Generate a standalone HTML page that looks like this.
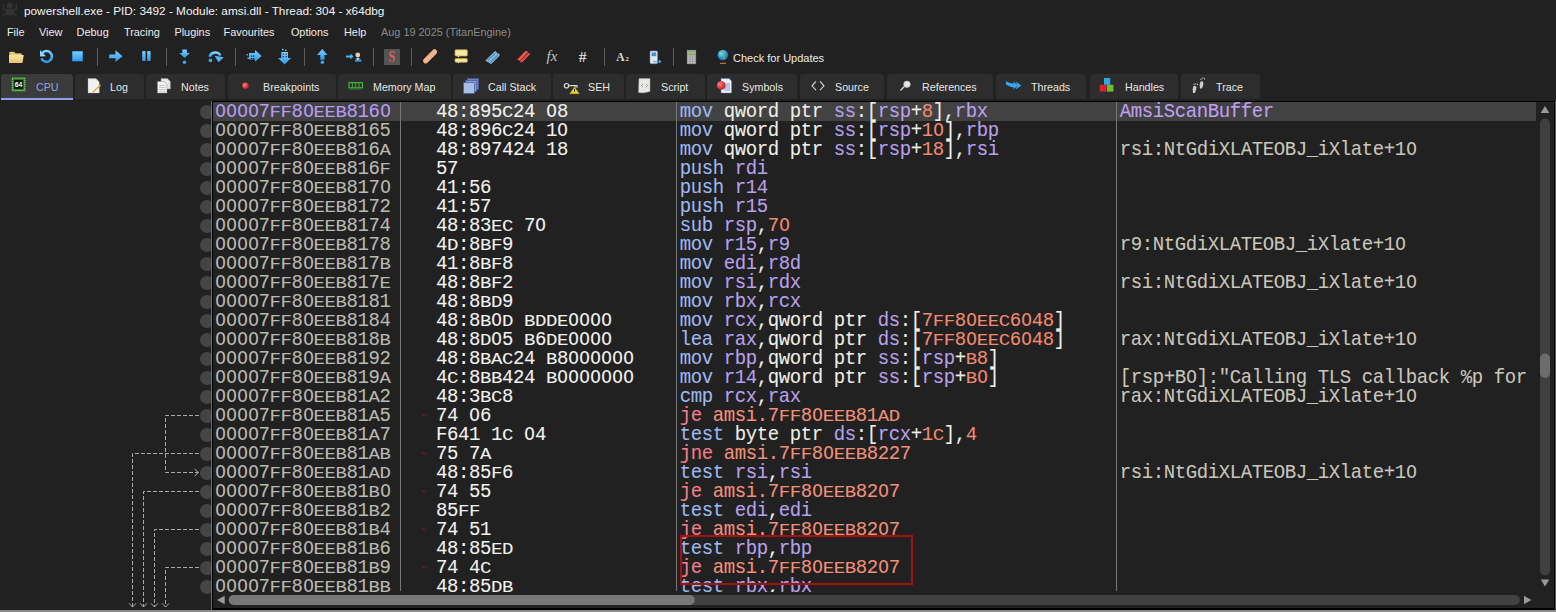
<!DOCTYPE html>
<html><head><meta charset="utf-8"><title>x64dbg</title>
<style>
html,body{margin:0;padding:0}
body{width:1556px;height:612px;background:#212121;overflow:hidden;position:relative}
.menu{position:absolute;top:26px;font:10.9px 'Liberation Sans', sans-serif;color:#ececec;white-space:pre;line-height:12px}
.tabt{position:absolute;top:81px;font:10.7px 'Liberation Sans', sans-serif;white-space:pre;line-height:12px}
.mono{position:absolute;transform:translateX(-0.20px) scaleY(1.06);transform-origin:0 15px;padding-top:1.4px;box-sizing:border-box;-webkit-text-stroke:0.08px currentColor;font-family:'Liberation Mono', monospace;font-size:19px;letter-spacing:-0.402px;line-height:19px;white-space:pre;height:19px}
.sc{font-weight:normal;display:inline-block;transform:scaleY(0.8);transform-origin:50% 80%}
.z{font-style:normal;display:inline-block;transform:scaleX(0.93)}
.sd{font-weight:normal;display:inline-block;transform:scaleY(0.84);transform-origin:50% 80%}
.bp{position:absolute;left:200.2px;width:14px;height:14px;border-radius:50%;background:#454545}
</style></head><body>

<svg style="position:absolute;left:0;top:0" width="22" height="20"><g fill="#333" stroke="#333"><circle cx="9.8" cy="5.4" r="3" stroke="none"/><path d="M6 9 h7.6 v6 h-7.6 Z" stroke="none"/><path d="M3.3 3.5 V8.5 L6.5 10.5 M16.3 3.5 V8.5 L13 10.5 M2 10 H6 M17.5 10 H13.5 M3 16 L6.5 12.5 M16.5 16 L13 12.5" stroke-width="1.2" fill="none"/></g></svg>
<div id="title" style="position:absolute;left:24px;top:2px;font:11.8px 'Liberation Sans', sans-serif;color:#f4f4f4;white-space:pre;line-height:18px">powershell.exe - PID: 3492 - Module: amsi.dll - Thread: 304 - x64dbg</div>

<div class="menu" style="left:6.9px">File</div>
<div class="menu" style="left:39.0px">View</div>
<div class="menu" style="left:76.6px">Debug</div>
<div class="menu" style="left:123.9px">Tracing</div>
<div class="menu" style="left:174.4px">Plugins</div>
<div class="menu" style="left:223.6px">Favourites</div>
<div class="menu" style="left:290.9px">Options</div>
<div class="menu" style="left:344.0px">Help</div>
<div class="menu" style="left:381px;color:#8a8a8a">Aug 19 2025 (TitanEngine)</div>
<div style="position:absolute;left:97px;top:48px;width:1px;height:18px;background:#5c5c5c"></div>
<div style="position:absolute;left:166px;top:48px;width:1px;height:18px;background:#5c5c5c"></div>
<div style="position:absolute;left:235px;top:48px;width:1px;height:18px;background:#5c5c5c"></div>
<div style="position:absolute;left:304px;top:48px;width:1px;height:18px;background:#5c5c5c"></div>
<div style="position:absolute;left:373px;top:48px;width:1px;height:18px;background:#5c5c5c"></div>
<div style="position:absolute;left:411px;top:48px;width:1px;height:18px;background:#5c5c5c"></div>
<div style="position:absolute;left:604px;top:48px;width:1px;height:18px;background:#5c5c5c"></div>
<div style="position:absolute;left:673px;top:48px;width:1px;height:18px;background:#5c5c5c"></div>
<svg style="position:absolute;left:0;top:0;z-index:5" width="1300" height="100" viewBox="0 0 1300 100"><defs>
<linearGradient id="gb" x1="0" y1="0" x2="0" y2="1"><stop offset="0" stop-color="#7fd0ff"/><stop offset="1" stop-color="#2a98e6"/></linearGradient>
<linearGradient id="gy" x1="0" y1="0" x2="0" y2="1"><stop offset="0" stop-color="#fbe6a6"/><stop offset="1" stop-color="#e9c270"/></linearGradient>
<radialGradient id="gglobe" cx="0.4" cy="0.35" r="0.7"><stop offset="0" stop-color="#8fe0ff"/><stop offset="0.6" stop-color="#2a8ed8"/><stop offset="1" stop-color="#1d5fa8"/></radialGradient>
<radialGradient id="gred" cx="0.35" cy="0.35" r="0.7"><stop offset="0" stop-color="#ff8080"/><stop offset="1" stop-color="#c01818"/></radialGradient>
</defs><path d="M9 51.5 h5 l1.5 1.5 h6.5 v3 H9 Z" fill="#e8c878" stroke="#1a1a1a" stroke-width="0.6"/><path d="M9 55 h14.7 l-1.2 8 H9 Z" fill="url(#gy)"/><path d="M42.2 53.2 A5.4 5.4 0 1 1 41.5 58.5" stroke="url(#gb)" stroke-width="2.6" fill="none"/><path d="M40 50 L46 56.2 L40 56.6 Z" fill="#8cd4ff"/><rect x="72" y="51" width="11" height="10.6" fill="url(#gb)" stroke="#0d3350" stroke-width="0.6"/><path d="M109.2 54.4 H115.5 V50.3 L122.6 56.2 L115.5 62 V58.2 H109.2 Z" fill="url(#gb)"/><rect x="142.2" y="51.1" width="3.4" height="10" rx="0.8" fill="url(#gb)"/><rect x="147.2" y="51.1" width="3.4" height="10" rx="0.8" fill="url(#gb)"/><path d="M182.3 49.4 H186.9 V53 H189.8 L184.6 57.9 L179.4 53 H182.3 Z" fill="url(#gb)"/><circle cx="184.5" cy="62.3" r="1.8" fill="#3aa8f0"/><circle cx="210.4" cy="60.4" r="1.8" fill="#3aa8f0"/><path d="M209.6 56.8 A6 6 0 0 1 220.5 55.5" stroke="url(#gb)" stroke-width="2.6" fill="none"/><path d="M214.5 55.8 L223.8 57.2 L218.6 62.3 Z" fill="#50b8f8"/><path d="M249 53 H255 V50 L261.7 56 L255 61.8 V59.6 H249 Z" fill="url(#gb)"/><rect x="246.5" y="54" width="1.5" height="1.5" fill="#4aaef0"/><rect x="247.5" y="57.5" width="1.5" height="1.5" fill="#4aaef0"/><rect x="251" y="55.5" width="1.3" height="1.3" fill="#1d2a36"/><rect x="251" y="58" width="1.3" height="1.3" fill="#1d2a36"/><rect x="253" y="55.5" width="1.3" height="1.3" fill="#1d2a36"/><rect x="253" y="58" width="1.3" height="1.3" fill="#1d2a36"/><path d="M281.3 52 H288 V58 H291 L284.6 64.4 L278 58 H281.3 Z" fill="url(#gb)"/><rect x="282" y="48.8" width="1.5" height="1.5" fill="#6cc4ff"/><rect x="285" y="49.6" width="1.5" height="1.5" fill="#6cc4ff"/><rect x="282.6" y="53.5" width="1.2" height="1.2" fill="#1d2a36"/><rect x="285.6" y="53.5" width="1.2" height="1.2" fill="#1d2a36"/><rect x="282.6" y="56" width="1.2" height="1.2" fill="#1d2a36"/><rect x="285.6" y="56" width="1.2" height="1.2" fill="#1d2a36"/><path d="M322.3 49 L327.6 55 H324.5 V59.7 H320.3 V55 H316.9 Z" fill="url(#gb)"/><circle cx="322.4" cy="62.2" r="1.8" fill="#3aa8f0"/><path d="M346 55.6 H350.5 V53.6 L353.5 56.5 L350.5 59.4 V57.4 H346 Z" fill="#50b8f8"/><circle cx="357.8" cy="55" r="2.4" fill="#f2c6a0"/><path d="M354.8 61.8 Q355.5 57.6 357.8 57.6 Q360.3 57.6 361.9 61.8 Z" fill="#3a8ad0"/><path d="M357 58 L358.6 58 L357.8 61 Z" fill="#fff"/><rect x="384" y="49" width="16" height="16" fill="#535650"/><text x="0" y="0" text-anchor="middle" transform="translate(391.8 62.4) scale(0.72 1)" font-family="Liberation Serif" font-weight="bold" font-size="16.5" fill="#d46a7a" stroke="#b04858" stroke-width="0.5">S</text><path d="M425.6 60.8 L434.6 51.8" stroke="#1a1a1a" stroke-width="6.4" stroke-linecap="round"/><path d="M425.6 60.8 L434.6 51.8" stroke="#f0b48e" stroke-width="5.2" stroke-linecap="round"/><path d="M428.5 53.5 l3.6 3.6 M430 52 l3.6 3.6" stroke="#d99670" stroke-width="0.6"/><rect x="455" y="49.8" width="12.3" height="6.2" rx="1" fill="#f3eaa8" stroke="#c9a638" stroke-width="0.8"/><rect x="455" y="58.6" width="12.3" height="3.6" rx="1" fill="#f3eaa8" stroke="#c9a638" stroke-width="0.8"/><path d="M457.5 56 l0.8 1.6 l1.2 -1.6 Z M457.5 62.2 l0.8 1.4 l1.2 -1.4 Z" fill="#f3eaa8"/><path d="M486 60.5 L494.5 52 L496 51.8 L496.6 53.4 L488.2 61.8 Z" fill="#3c9ad6" stroke="#e8f4ff" stroke-width="0.7"/><path d="M489 62.3 L497.2 54 L498.8 53.9 L499.2 55.5 L491 63.6 Z" fill="#3c9ad6" stroke="#e8f4ff" stroke-width="0.7"/><path d="M517 59.8 L525.4 51 L528.5 51.5 L520 60.8 Z" fill="#f05454"/><path d="M519.6 61.8 L528 53 L530.6 53.6 L522.2 62.6 Z" fill="#f04848"/><text x="546.5" y="60.6" font-family="Liberation Serif" font-style="italic" font-size="15" fill="#c4c4c4">fx</text><text x="578.8" y="62.4" font-family="Liberation Serif" font-weight="bold" font-size="15.5" fill="#d4d4d4">#</text><text x="616.3" y="61.4" font-family="Liberation Serif" font-weight="bold" font-size="11.6" fill="#dcdcdc">A</text><text x="625.4" y="61.4" font-family="Liberation Serif" font-weight="bold" font-size="6.8" fill="#dcdcdc">2</text><rect x="650" y="50.9" width="7.6" height="12.8" rx="1.2" fill="#dfe6ee" stroke="#7a8a9a" stroke-width="0.5"/><rect x="651.6" y="52.4" width="4.6" height="3.8" fill="#4a90d8"/><path d="M653.5 61.3 H659 V59.6 L661.8 61.5 L659 63.4 V62.3 H653.5 Z" fill="#3aa0f0"/><rect x="686.6" y="49.6" width="9.8" height="14.9" fill="#959595" stroke="#151515" stroke-width="0.6"/><rect x="687.6" y="51.4" width="7.8" height="2.6" fill="#90c078"/><rect x="687.8" y="55.3" width="1.8" height="1.4" fill="#c8c8c8"/><rect x="690.5" y="55.3" width="1.8" height="1.4" fill="#c8c8c8"/><rect x="693.2" y="55.3" width="1.8" height="1.4" fill="#c8c8c8"/><rect x="687.8" y="57.5" width="1.8" height="1.4" fill="#c8c8c8"/><rect x="690.5" y="57.5" width="1.8" height="1.4" fill="#c8c8c8"/><rect x="693.2" y="57.5" width="1.8" height="1.4" fill="#c8c8c8"/><rect x="687.8" y="59.7" width="1.8" height="1.4" fill="#c8c8c8"/><rect x="690.5" y="59.7" width="1.8" height="1.4" fill="#c8c8c8"/><rect x="693.2" y="59.7" width="1.8" height="1.4" fill="#c8c8c8"/><rect x="687.8" y="61.9" width="1.8" height="1.4" fill="#c8c8c8"/><rect x="690.5" y="61.9" width="1.8" height="1.4" fill="#c8c8c8"/><rect x="693.2" y="61.9" width="1.8" height="1.4" fill="#c8c8c8"/><circle cx="722.9" cy="55" r="5.3" fill="url(#gglobe)"/><path d="M720 52 q2 -1 3 1 q-1 2 1 3 q1 2 -1 3" stroke="#5cc05c" stroke-width="1.3" fill="none"/><rect x="720" y="62.8" width="6" height="1" fill="#e08040"/><rect x="11.6" y="77.4" width="14" height="14" fill="#2f7f28"/><rect x="12.4" y="78.2" width="12.4" height="12.4" fill="none" stroke="#9be08a" stroke-width="1" stroke-dasharray="1 1"/><rect x="14" y="79.8" width="9.2" height="9.2" fill="#0c1f0a"/><text x="18.6" y="87.2" text-anchor="middle" font-family="Liberation Sans" font-weight="bold" font-size="6.8" fill="#ffffff">64</text><path d="M88 78.6 H96 L99.3 82 V93 H88 Z" fill="#f2f2f2" stroke="#9a9a9a" stroke-width="0.4"/><path d="M93 92 L100.5 85" stroke="#d9b43a" stroke-width="1.6"/><path d="M161 78.6 H167.5 L170.4 81.5 V89 H161 Z" fill="#e8e8e8" stroke="#888" stroke-width="0.5"/><path d="M157.5 81.5 H164 L167 84.4 V93 H157.5 Z" fill="#f4f4f4" stroke="#888" stroke-width="0.5"/><path d="M159 85.5 H165.5" stroke="#9aa0a8" stroke-width="0.5"/><path d="M159 87.5 H165.5" stroke="#9aa0a8" stroke-width="0.5"/><path d="M159 89.5 H165.5" stroke="#9aa0a8" stroke-width="0.5"/><path d="M159 91.2 H165.5" stroke="#9aa0a8" stroke-width="0.5"/><circle cx="245.5" cy="85.8" r="3.2" fill="url(#gred)"/><rect x="349" y="82.6" width="13.4" height="5.2" fill="none" stroke="#3fb43a" stroke-width="1.2"/><path d="M352.4 82.6 V87.8 M355.7 82.6 V87.8 M359 82.6 V87.8" stroke="#3fb43a" stroke-width="1"/><path d="M349.5 89.2 H362" stroke="#3fb43a" stroke-width="1" stroke-dasharray="0.7 0.9"/><rect x="467.5" y="78.6" width="11" height="11" fill="#6f86c0" stroke="#3e5aa0" stroke-width="0.7"/><rect x="465.5" y="80.6" width="11" height="11" fill="#8aa0d6" stroke="#3e5aa0" stroke-width="0.7"/><rect x="463.5" y="82.6" width="11" height="11" fill="#a9bde8" stroke="#3e5aa0" stroke-width="0.7"/><circle cx="566.5" cy="85.7" r="2.2" fill="none" stroke="#d8d8d8" stroke-width="1.2"/><path d="M568.6 85.7 H577.6 M575 85.7 v2 M577 85.7 v2" stroke="#d8d8d8" stroke-width="1.2"/><path d="M574.5 86.6 L579.7 94 H569.3 Z" fill="#f2d020" stroke="#404040" stroke-width="0.5"/><path d="M574.5 89 V91.6" stroke="#222" stroke-width="1"/><path d="M639 78.6 H650 V91.5 Q644 93.5 638.5 92.6 Z" fill="#e8e8e4" stroke="#a0a0a0" stroke-width="0.5"/><path d="M643 84 l-1.6 1.6 l1.6 1.6 M646 84 l1.6 1.6 l-1.6 1.6" stroke="#707070" stroke-width="0.7" fill="none"/><path d="M721 78.6 H729 L731.6 81 V93 H721 Z" fill="#f0f4ff" stroke="#5070c0" stroke-width="0.5"/><path d="M724 84 H730" stroke="#4a6ad0" stroke-width="0.7"/><path d="M724 86 H730" stroke="#4a6ad0" stroke-width="0.7"/><path d="M724 88 H730" stroke="#4a6ad0" stroke-width="0.7"/><path d="M724 90 H730" stroke="#4a6ad0" stroke-width="0.7"/><circle cx="721.2" cy="85.4" r="4.3" fill="url(#gred)"/><path d="M816 81.4 L812 85.8 L816 90.2 M820 81.4 L824 85.8 L820 90.2" stroke="#d6d6d6" stroke-width="1.1" fill="none"/><path d="M900.5 90.4 L905 85.8" stroke="#d0d0d0" stroke-width="1.4"/><circle cx="907" cy="84.3" r="3.3" fill="#e8e8e8" stroke="#b0b0b0" stroke-width="0.6"/><path d="M1006 81 Q1010 84 1014 83.3 L1013 81.3 L1018 85.6 L1013 89.6 L1014 87.5 Q1010 87 1006 84.5 Z" fill="#3aa6f0"/><path d="M1015.5 81.3 L1021.4 85.6 L1015.5 89.6 L1017.6 85.6 Z" fill="#3aa6f0"/><rect x="1104" y="78" width="6.2" height="6.8" fill="#2aa8e8"/><rect x="1099.8" y="84.8" width="6.6" height="6.8" fill="#e0202a"/><rect x="1107" y="84.8" width="6.4" height="6.8" fill="#6cc030"/><path d="M1193 93 q-1 -4 0.5 -7 q2.5 -1 3 1.5 q-0.5 3 -1.5 5.5 Z" fill="#cfcfcf"/><path d="M1200 88.5 q-1 -4 0.5 -7 q2.5 -1 3 1.5 q-0.5 3 -1.5 5.5 Z" fill="#cfcfcf"/><path d="M1193.5 84.3 h1 M1195.3 83.8 h1 M1197 84.3 h1 M1200.5 79.3 h1 M1202.3 78.2 h1 M1204 78.8 h1" stroke="#cfcfcf" stroke-width="1.2"/></svg>
<div style="position:absolute;left:733px;top:50px;font:11px 'Liberation Sans', sans-serif;color:#ececec;white-space:pre;line-height:16px">Check for Updates</div>
<div style="position:absolute;left:1px;top:74px;width:72px;height:25px;background:#3b3b3b;border-radius:3px 3px 0 0"></div>
<div class="tabt" style="left:36px;color:#8fa2e6">CPU</div>

<div style="position:absolute;left:75px;top:74px;width:69px;height:25px;background:#2d2d2d;border-radius:3px 3px 0 0"></div>
<div class="tabt" style="left:110px;color:#e6e6e6">Log</div>

<div style="position:absolute;left:146px;top:74px;width:79px;height:25px;background:#2d2d2d;border-radius:3px 3px 0 0"></div>
<div class="tabt" style="left:181px;color:#e6e6e6">Notes</div>

<div style="position:absolute;left:228px;top:74px;width:108px;height:25px;background:#2d2d2d;border-radius:3px 3px 0 0"></div>
<div class="tabt" style="left:263px;color:#e6e6e6">Breakpoints</div>

<div style="position:absolute;left:338px;top:74px;width:113px;height:25px;background:#2d2d2d;border-radius:3px 3px 0 0"></div>
<div class="tabt" style="left:373px;color:#e6e6e6">Memory Map</div>

<div style="position:absolute;left:453px;top:74px;width:98px;height:25px;background:#2d2d2d;border-radius:3px 3px 0 0"></div>
<div class="tabt" style="left:488px;color:#e6e6e6">Call Stack</div>

<div style="position:absolute;left:553px;top:74px;width:71px;height:25px;background:#2d2d2d;border-radius:3px 3px 0 0"></div>
<div class="tabt" style="left:588px;color:#e6e6e6">SEH</div>

<div style="position:absolute;left:626px;top:74px;width:79px;height:25px;background:#2d2d2d;border-radius:3px 3px 0 0"></div>
<div class="tabt" style="left:661px;color:#e6e6e6">Script</div>

<div style="position:absolute;left:707px;top:74px;width:90px;height:25px;background:#2d2d2d;border-radius:3px 3px 0 0"></div>
<div class="tabt" style="left:742px;color:#e6e6e6">Symbols</div>

<div style="position:absolute;left:800px;top:74px;width:84px;height:25px;background:#2d2d2d;border-radius:3px 3px 0 0"></div>
<div class="tabt" style="left:835px;color:#e6e6e6">Source</div>

<div style="position:absolute;left:887px;top:74px;width:106px;height:25px;background:#2d2d2d;border-radius:3px 3px 0 0"></div>
<div class="tabt" style="left:922px;color:#e6e6e6">References</div>

<div style="position:absolute;left:996px;top:74px;width:90px;height:25px;background:#2d2d2d;border-radius:3px 3px 0 0"></div>
<div class="tabt" style="left:1031px;color:#e6e6e6">Threads</div>

<div style="position:absolute;left:1090px;top:74px;width:88px;height:25px;background:#2d2d2d;border-radius:3px 3px 0 0"></div>
<div class="tabt" style="left:1125px;color:#e6e6e6">Handles</div>

<div style="position:absolute;left:1181px;top:74px;width:79px;height:25px;background:#2d2d2d;border-radius:3px 3px 0 0"></div>
<div class="tabt" style="left:1216px;color:#e6e6e6">Trace</div>

<div style="position:absolute;left:1px;top:98px;width:72px;height:2px;background:#8ea0ec"></div>
<div style="position:absolute;left:212px;top:101px;width:1343px;height:1px;background:#000"></div>
<div style="position:absolute;left:211px;top:101px;width:1px;height:509px;background:#6e6e6e"></div>
<div style="position:absolute;left:212px;top:101px;width:1px;height:509px;background:#000"></div>
<div style="position:absolute;left:1554px;top:101px;width:1px;height:509px;background:#000"></div>
<div style="position:absolute;left:1555px;top:101px;width:1px;height:509px;background:#5a5a5a"></div>
<div style="position:absolute;left:212px;top:608px;width:1343px;height:2px;background:#000"></div>
<div style="position:absolute;left:0px;top:610px;width:1556px;height:2px;background:#8a8a8a"></div>
<div style="position:absolute;left:213px;top:102px;width:1323px;height:19px;background:#424242"></div>
<div style="position:absolute;left:400px;top:102px;width:1px;height:489px;background:#787878"></div>
<div style="position:absolute;left:676px;top:102px;width:1px;height:489px;background:#787878"></div>
<div style="position:absolute;left:1116px;top:102px;width:1px;height:489px;background:#787878"></div>
<div style="position:absolute;left:0;top:101px;width:211px;height:509px;overflow:hidden">
<div class="bp" style="top:3.5px"></div>
<div class="bp" style="top:22.5px"></div>
<div class="bp" style="top:41.5px"></div>
<div class="bp" style="top:60.5px"></div>
<div class="bp" style="top:79.5px"></div>
<div class="bp" style="top:98.5px"></div>
<div class="bp" style="top:117.5px"></div>
<div class="bp" style="top:136.5px"></div>
<div class="bp" style="top:155.5px"></div>
<div class="bp" style="top:174.5px"></div>
<div class="bp" style="top:193.5px"></div>
<div class="bp" style="top:212.5px"></div>
<div class="bp" style="top:231.5px"></div>
<div class="bp" style="top:250.5px"></div>
<div class="bp" style="top:269.5px"></div>
<div class="bp" style="top:288.5px"></div>
<div class="bp" style="top:307.5px"></div>
<div class="bp" style="top:326.5px"></div>
<div class="bp" style="top:345.5px"></div>
<div class="bp" style="top:364.5px"></div>
<div class="bp" style="top:383.5px"></div>
<div class="bp" style="top:402.5px"></div>
<div class="bp" style="top:421.5px"></div>
<div class="bp" style="top:440.5px"></div>
<div class="bp" style="top:459.5px"></div>
<div class="bp" style="top:478.5px"></div>
</div>
<div id="rows" style="position:absolute;left:0;top:0;width:1536px;height:592px;overflow:hidden">
<div class="mono" style="left:214.6px;top:102px;color:#b79cf2"><i class="z">O</i><i class="z">O</i><i class="z">O</i><i class="z">O</i>7<b class="sc">F</b><b class="sc">F</b>8<i class="z">O</i><b class="sc">E</b><b class="sc">E</b><b class="sc">B</b>816<i class="z">O</i></div>
<div class="mono" style="left:436.2px;top:102px;color:#f2f2ee">48:895<b class="sc">C</b>24 <i class="z">O</i>8</div>
<div class="mono" style="left:680px;top:102px"><span style="color:#9fb8f0">mov</span><span style="color:#eeeee6"> qword ptr </span><span style="color:#b8a0e8">ss</span><span style="color:#eeeee6">:[</span><span style="color:#b8a0ec">rsp</span><span style="color:#eeeee6">+</span><span style="color:#f08a70">8</span><span style="color:#eeeee6">],</span><span style="color:#b8a0ec">rbx</span></div>
<div class="mono" style="left:1120px;top:102px;color:#c0a0f0">AmsiScanBuffer</div>
<div class="mono" style="left:214.6px;top:121px;color:#b9b9b1"><i class="z">O</i><i class="z">O</i><i class="z">O</i><i class="z">O</i>7<b class="sc">F</b><b class="sc">F</b>8<i class="z">O</i><b class="sc">E</b><b class="sc">E</b><b class="sc">B</b>8165</div>
<div class="mono" style="left:436.2px;top:121px;color:#f2f2ee">48:896<b class="sc">C</b>24 1<i class="z">O</i></div>
<div class="mono" style="left:680px;top:121px"><span style="color:#9fb8f0">mov</span><span style="color:#eeeee6"> qword ptr </span><span style="color:#b8a0e8">ss</span><span style="color:#eeeee6">:[</span><span style="color:#b8a0ec">rsp</span><span style="color:#eeeee6">+</span><span style="color:#f08a70">1<i class="z">O</i></span><span style="color:#eeeee6">],</span><span style="color:#b8a0ec">rbp</span></div>
<div class="mono" style="left:214.6px;top:140px;color:#b9b9b1"><i class="z">O</i><i class="z">O</i><i class="z">O</i><i class="z">O</i>7<b class="sc">F</b><b class="sc">F</b>8<i class="z">O</i><b class="sc">E</b><b class="sc">E</b><b class="sc">B</b>816<b class="sc">A</b></div>
<div class="mono" style="left:436.2px;top:140px;color:#f2f2ee">48:897424 18</div>
<div class="mono" style="left:680px;top:140px"><span style="color:#9fb8f0">mov</span><span style="color:#eeeee6"> qword ptr </span><span style="color:#b8a0e8">ss</span><span style="color:#eeeee6">:[</span><span style="color:#b8a0ec">rsp</span><span style="color:#eeeee6">+</span><span style="color:#f08a70">18</span><span style="color:#eeeee6">],</span><span style="color:#b8a0ec">rsi</span></div>
<div class="mono" style="left:1120px;top:140px;color:#c9c6bb">rsi:NtGdiXLATEOBJ_iXlate+1<i class="z">O</i></div>
<div class="mono" style="left:214.6px;top:159px;color:#b9b9b1"><i class="z">O</i><i class="z">O</i><i class="z">O</i><i class="z">O</i>7<b class="sc">F</b><b class="sc">F</b>8<i class="z">O</i><b class="sc">E</b><b class="sc">E</b><b class="sc">B</b>816<b class="sc">F</b></div>
<div class="mono" style="left:436.2px;top:159px;color:#f2f2ee">57</div>
<div class="mono" style="left:680px;top:159px"><span style="color:#9fb8f0">push</span><span style="color:#eeeee6"> </span><span style="color:#b8a0ec">rdi</span></div>
<div class="mono" style="left:214.6px;top:178px;color:#b9b9b1"><i class="z">O</i><i class="z">O</i><i class="z">O</i><i class="z">O</i>7<b class="sc">F</b><b class="sc">F</b>8<i class="z">O</i><b class="sc">E</b><b class="sc">E</b><b class="sc">B</b>817<i class="z">O</i></div>
<div class="mono" style="left:436.2px;top:178px;color:#f2f2ee">41:56</div>
<div class="mono" style="left:680px;top:178px"><span style="color:#9fb8f0">push</span><span style="color:#eeeee6"> </span><span style="color:#b8a0ec">r14</span></div>
<div class="mono" style="left:214.6px;top:197px;color:#b9b9b1"><i class="z">O</i><i class="z">O</i><i class="z">O</i><i class="z">O</i>7<b class="sc">F</b><b class="sc">F</b>8<i class="z">O</i><b class="sc">E</b><b class="sc">E</b><b class="sc">B</b>8172</div>
<div class="mono" style="left:436.2px;top:197px;color:#f2f2ee">41:57</div>
<div class="mono" style="left:680px;top:197px"><span style="color:#9fb8f0">push</span><span style="color:#eeeee6"> </span><span style="color:#b8a0ec">r15</span></div>
<div class="mono" style="left:214.6px;top:216px;color:#b9b9b1"><i class="z">O</i><i class="z">O</i><i class="z">O</i><i class="z">O</i>7<b class="sc">F</b><b class="sc">F</b>8<i class="z">O</i><b class="sc">E</b><b class="sc">E</b><b class="sc">B</b>8174</div>
<div class="mono" style="left:436.2px;top:216px;color:#f2f2ee">48:83<b class="sc">E</b><b class="sc">C</b> 7<i class="z">O</i></div>
<div class="mono" style="left:680px;top:216px"><span style="color:#9fb8f0">sub</span><span style="color:#eeeee6"> </span><span style="color:#b8a0ec">rsp</span><span style="color:#eeeee6">,</span><span style="color:#f08a70">7<i class="z">O</i></span></div>
<div class="mono" style="left:214.6px;top:235px;color:#b9b9b1"><i class="z">O</i><i class="z">O</i><i class="z">O</i><i class="z">O</i>7<b class="sc">F</b><b class="sc">F</b>8<i class="z">O</i><b class="sc">E</b><b class="sc">E</b><b class="sc">B</b>8178</div>
<div class="mono" style="left:436.2px;top:235px;color:#f2f2ee">4<b class="sc">D</b>:8<b class="sc">B</b><b class="sc">F</b>9</div>
<div class="mono" style="left:680px;top:235px"><span style="color:#9fb8f0">mov</span><span style="color:#eeeee6"> </span><span style="color:#b8a0ec">r15</span><span style="color:#eeeee6">,</span><span style="color:#b8a0ec">r9</span></div>
<div class="mono" style="left:1120px;top:235px;color:#c9c6bb">r9:NtGdiXLATEOBJ_iXlate+1<i class="z">O</i></div>
<div class="mono" style="left:214.6px;top:254px;color:#b9b9b1"><i class="z">O</i><i class="z">O</i><i class="z">O</i><i class="z">O</i>7<b class="sc">F</b><b class="sc">F</b>8<i class="z">O</i><b class="sc">E</b><b class="sc">E</b><b class="sc">B</b>817<b class="sc">B</b></div>
<div class="mono" style="left:436.2px;top:254px;color:#f2f2ee">41:8<b class="sc">B</b><b class="sc">F</b>8</div>
<div class="mono" style="left:680px;top:254px"><span style="color:#9fb8f0">mov</span><span style="color:#eeeee6"> </span><span style="color:#b8a0ec">edi</span><span style="color:#eeeee6">,</span><span style="color:#b8a0ec">r8d</span></div>
<div class="mono" style="left:214.6px;top:273px;color:#b9b9b1"><i class="z">O</i><i class="z">O</i><i class="z">O</i><i class="z">O</i>7<b class="sc">F</b><b class="sc">F</b>8<i class="z">O</i><b class="sc">E</b><b class="sc">E</b><b class="sc">B</b>817<b class="sc">E</b></div>
<div class="mono" style="left:436.2px;top:273px;color:#f2f2ee">48:8<b class="sc">B</b><b class="sc">F</b>2</div>
<div class="mono" style="left:680px;top:273px"><span style="color:#9fb8f0">mov</span><span style="color:#eeeee6"> </span><span style="color:#b8a0ec">rsi</span><span style="color:#eeeee6">,</span><span style="color:#b8a0ec">rdx</span></div>
<div class="mono" style="left:1120px;top:273px;color:#c9c6bb">rsi:NtGdiXLATEOBJ_iXlate+1<i class="z">O</i></div>
<div class="mono" style="left:214.6px;top:292px;color:#b9b9b1"><i class="z">O</i><i class="z">O</i><i class="z">O</i><i class="z">O</i>7<b class="sc">F</b><b class="sc">F</b>8<i class="z">O</i><b class="sc">E</b><b class="sc">E</b><b class="sc">B</b>8181</div>
<div class="mono" style="left:436.2px;top:292px;color:#f2f2ee">48:8<b class="sc">B</b><b class="sc">D</b>9</div>
<div class="mono" style="left:680px;top:292px"><span style="color:#9fb8f0">mov</span><span style="color:#eeeee6"> </span><span style="color:#b8a0ec">rbx</span><span style="color:#eeeee6">,</span><span style="color:#b8a0ec">rcx</span></div>
<div class="mono" style="left:214.6px;top:311px;color:#b9b9b1"><i class="z">O</i><i class="z">O</i><i class="z">O</i><i class="z">O</i>7<b class="sc">F</b><b class="sc">F</b>8<i class="z">O</i><b class="sc">E</b><b class="sc">E</b><b class="sc">B</b>8184</div>
<div class="mono" style="left:436.2px;top:311px;color:#f2f2ee">48:8<b class="sc">B</b><i class="z">O</i><b class="sc">D</b> <b class="sc">B</b><b class="sc">D</b><b class="sc">D</b><b class="sc">E</b><i class="z">O</i><i class="z">O</i><i class="z">O</i><i class="z">O</i></div>
<div class="mono" style="left:680px;top:311px"><span style="color:#9fb8f0">mov</span><span style="color:#eeeee6"> </span><span style="color:#b8a0ec">rcx</span><span style="color:#eeeee6">,qword ptr </span><span style="color:#b8a0e8">ds</span><span style="color:#eeeee6">:[</span><span style="color:#f08a70">7<b class="sd">F</b><b class="sd">F</b>8<i class="z">O</i><b class="sd">E</b><b class="sd">E</b><b class="sd">C</b>6<i class="z">O</i>48</span><span style="color:#eeeee6">]</span></div>
<div class="mono" style="left:214.6px;top:330px;color:#b9b9b1"><i class="z">O</i><i class="z">O</i><i class="z">O</i><i class="z">O</i>7<b class="sc">F</b><b class="sc">F</b>8<i class="z">O</i><b class="sc">E</b><b class="sc">E</b><b class="sc">B</b>818<b class="sc">B</b></div>
<div class="mono" style="left:436.2px;top:330px;color:#f2f2ee">48:8<b class="sc">D</b><i class="z">O</i>5 <b class="sc">B</b>6<b class="sc">D</b><b class="sc">E</b><i class="z">O</i><i class="z">O</i><i class="z">O</i><i class="z">O</i></div>
<div class="mono" style="left:680px;top:330px"><span style="color:#9fb8f0">lea</span><span style="color:#eeeee6"> </span><span style="color:#b8a0ec">rax</span><span style="color:#eeeee6">,qword ptr </span><span style="color:#b8a0e8">ds</span><span style="color:#eeeee6">:[</span><span style="color:#f08a70">7<b class="sd">F</b><b class="sd">F</b>8<i class="z">O</i><b class="sd">E</b><b class="sd">E</b><b class="sd">C</b>6<i class="z">O</i>48</span><span style="color:#eeeee6">]</span></div>
<div class="mono" style="left:1120px;top:330px;color:#c9c6bb">rax:NtGdiXLATEOBJ_iXlate+1<i class="z">O</i></div>
<div class="mono" style="left:214.6px;top:349px;color:#b9b9b1"><i class="z">O</i><i class="z">O</i><i class="z">O</i><i class="z">O</i>7<b class="sc">F</b><b class="sc">F</b>8<i class="z">O</i><b class="sc">E</b><b class="sc">E</b><b class="sc">B</b>8192</div>
<div class="mono" style="left:436.2px;top:349px;color:#f2f2ee">48:8<b class="sc">B</b><b class="sc">A</b><b class="sc">C</b>24 <b class="sc">B</b>8<i class="z">O</i><i class="z">O</i><i class="z">O</i><i class="z">O</i><i class="z">O</i><i class="z">O</i></div>
<div class="mono" style="left:680px;top:349px"><span style="color:#9fb8f0">mov</span><span style="color:#eeeee6"> </span><span style="color:#b8a0ec">rbp</span><span style="color:#eeeee6">,qword ptr </span><span style="color:#b8a0e8">ss</span><span style="color:#eeeee6">:[</span><span style="color:#b8a0ec">rsp</span><span style="color:#eeeee6">+</span><span style="color:#f08a70"><b class="sd">B</b>8</span><span style="color:#eeeee6">]</span></div>
<div class="mono" style="left:214.6px;top:368px;color:#b9b9b1"><i class="z">O</i><i class="z">O</i><i class="z">O</i><i class="z">O</i>7<b class="sc">F</b><b class="sc">F</b>8<i class="z">O</i><b class="sc">E</b><b class="sc">E</b><b class="sc">B</b>819<b class="sc">A</b></div>
<div class="mono" style="left:436.2px;top:368px;color:#f2f2ee">4<b class="sc">C</b>:8<b class="sc">B</b><b class="sc">B</b>424 <b class="sc">B</b><i class="z">O</i><i class="z">O</i><i class="z">O</i><i class="z">O</i><i class="z">O</i><i class="z">O</i><i class="z">O</i></div>
<div class="mono" style="left:680px;top:368px"><span style="color:#9fb8f0">mov</span><span style="color:#eeeee6"> </span><span style="color:#b8a0ec">r14</span><span style="color:#eeeee6">,qword ptr </span><span style="color:#b8a0e8">ss</span><span style="color:#eeeee6">:[</span><span style="color:#b8a0ec">rsp</span><span style="color:#eeeee6">+</span><span style="color:#f08a70"><b class="sd">B</b><i class="z">O</i></span><span style="color:#eeeee6">]</span></div>
<div class="mono" style="left:1120px;top:368px;color:#c9c6bb">[rsp+B<i class="z">O</i>]:&quot;Calling TLS callback %p for</div>
<div class="mono" style="left:214.6px;top:387px;color:#b9b9b1"><i class="z">O</i><i class="z">O</i><i class="z">O</i><i class="z">O</i>7<b class="sc">F</b><b class="sc">F</b>8<i class="z">O</i><b class="sc">E</b><b class="sc">E</b><b class="sc">B</b>81<b class="sc">A</b>2</div>
<div class="mono" style="left:436.2px;top:387px;color:#f2f2ee">48:3<b class="sc">B</b><b class="sc">C</b>8</div>
<div class="mono" style="left:680px;top:387px"><span style="color:#9fb8f0">cmp</span><span style="color:#eeeee6"> </span><span style="color:#b8a0ec">rcx</span><span style="color:#eeeee6">,</span><span style="color:#b8a0ec">rax</span></div>
<div class="mono" style="left:1120px;top:387px;color:#c9c6bb">rax:NtGdiXLATEOBJ_iXlate+1<i class="z">O</i></div>
<div class="mono" style="left:214.6px;top:406px;color:#b9b9b1"><i class="z">O</i><i class="z">O</i><i class="z">O</i><i class="z">O</i>7<b class="sc">F</b><b class="sc">F</b>8<i class="z">O</i><b class="sc">E</b><b class="sc">E</b><b class="sc">B</b>81<b class="sc">A</b>5</div>
<div class="mono" style="left:436.2px;top:406px;color:#f2f2ee">74 <i class="z">O</i>6</div>
<svg style="position:absolute;left:421px;top:413px" width="7" height="5"><path d="M1.2 1.2 L3.3 3.3 L5.4 1.2" stroke="#8a1c30" stroke-width="0.9" fill="none"/></svg>
<div class="mono" style="left:680px;top:406px"><span style="color:#f07c8c">je</span><span style="color:#eeeee6"> </span><span style="color:#f09078">amsi.7<b class="sd">F</b><b class="sd">F</b>8<i class="z">O</i><b class="sd">E</b><b class="sd">E</b><b class="sd">B</b>81<b class="sd">A</b><b class="sd">D</b></span></div>
<div class="mono" style="left:214.6px;top:425px;color:#b9b9b1"><i class="z">O</i><i class="z">O</i><i class="z">O</i><i class="z">O</i>7<b class="sc">F</b><b class="sc">F</b>8<i class="z">O</i><b class="sc">E</b><b class="sc">E</b><b class="sc">B</b>81<b class="sc">A</b>7</div>
<div class="mono" style="left:436.2px;top:425px;color:#f2f2ee">F641 1<b class="sc">C</b> <i class="z">O</i>4</div>
<div class="mono" style="left:680px;top:425px"><span style="color:#9fb8f0">test</span><span style="color:#eeeee6"> byte ptr </span><span style="color:#b8a0e8">ds</span><span style="color:#eeeee6">:[</span><span style="color:#b8a0ec">rcx</span><span style="color:#eeeee6">+</span><span style="color:#f08a70">1<b class="sd">C</b></span><span style="color:#eeeee6">],</span><span style="color:#f08a70">4</span></div>
<div class="mono" style="left:214.6px;top:444px;color:#b9b9b1"><i class="z">O</i><i class="z">O</i><i class="z">O</i><i class="z">O</i>7<b class="sc">F</b><b class="sc">F</b>8<i class="z">O</i><b class="sc">E</b><b class="sc">E</b><b class="sc">B</b>81<b class="sc">A</b><b class="sc">B</b></div>
<div class="mono" style="left:436.2px;top:444px;color:#f2f2ee">75 7<b class="sc">A</b></div>
<svg style="position:absolute;left:421px;top:451px" width="7" height="5"><path d="M1.2 1.2 L3.3 3.3 L5.4 1.2" stroke="#8a1c30" stroke-width="0.9" fill="none"/></svg>
<div class="mono" style="left:680px;top:444px"><span style="color:#f07c8c">jne</span><span style="color:#eeeee6"> </span><span style="color:#f09078">amsi.7<b class="sd">F</b><b class="sd">F</b>8<i class="z">O</i><b class="sd">E</b><b class="sd">E</b><b class="sd">B</b>8227</span></div>
<div class="mono" style="left:214.6px;top:463px;color:#b9b9b1"><i class="z">O</i><i class="z">O</i><i class="z">O</i><i class="z">O</i>7<b class="sc">F</b><b class="sc">F</b>8<i class="z">O</i><b class="sc">E</b><b class="sc">E</b><b class="sc">B</b>81<b class="sc">A</b><b class="sc">D</b></div>
<div class="mono" style="left:436.2px;top:463px;color:#f2f2ee">48:85<b class="sc">F</b>6</div>
<div class="mono" style="left:680px;top:463px"><span style="color:#9fb8f0">test</span><span style="color:#eeeee6"> </span><span style="color:#b8a0ec">rsi</span><span style="color:#eeeee6">,</span><span style="color:#b8a0ec">rsi</span></div>
<div class="mono" style="left:1120px;top:463px;color:#c9c6bb">rsi:NtGdiXLATEOBJ_iXlate+1<i class="z">O</i></div>
<div class="mono" style="left:214.6px;top:482px;color:#b9b9b1"><i class="z">O</i><i class="z">O</i><i class="z">O</i><i class="z">O</i>7<b class="sc">F</b><b class="sc">F</b>8<i class="z">O</i><b class="sc">E</b><b class="sc">E</b><b class="sc">B</b>81<b class="sc">B</b><i class="z">O</i></div>
<div class="mono" style="left:436.2px;top:482px;color:#f2f2ee">74 55</div>
<svg style="position:absolute;left:421px;top:489px" width="7" height="5"><path d="M1.2 1.2 L3.3 3.3 L5.4 1.2" stroke="#8a1c30" stroke-width="0.9" fill="none"/></svg>
<div class="mono" style="left:680px;top:482px"><span style="color:#f07c8c">je</span><span style="color:#eeeee6"> </span><span style="color:#f09078">amsi.7<b class="sd">F</b><b class="sd">F</b>8<i class="z">O</i><b class="sd">E</b><b class="sd">E</b><b class="sd">B</b>82<i class="z">O</i>7</span></div>
<div class="mono" style="left:214.6px;top:501px;color:#b9b9b1"><i class="z">O</i><i class="z">O</i><i class="z">O</i><i class="z">O</i>7<b class="sc">F</b><b class="sc">F</b>8<i class="z">O</i><b class="sc">E</b><b class="sc">E</b><b class="sc">B</b>81<b class="sc">B</b>2</div>
<div class="mono" style="left:436.2px;top:501px;color:#f2f2ee">85<b class="sc">F</b><b class="sc">F</b></div>
<div class="mono" style="left:680px;top:501px"><span style="color:#9fb8f0">test</span><span style="color:#eeeee6"> </span><span style="color:#b8a0ec">edi</span><span style="color:#eeeee6">,</span><span style="color:#b8a0ec">edi</span></div>
<div class="mono" style="left:214.6px;top:520px;color:#b9b9b1"><i class="z">O</i><i class="z">O</i><i class="z">O</i><i class="z">O</i>7<b class="sc">F</b><b class="sc">F</b>8<i class="z">O</i><b class="sc">E</b><b class="sc">E</b><b class="sc">B</b>81<b class="sc">B</b>4</div>
<div class="mono" style="left:436.2px;top:520px;color:#f2f2ee">74 51</div>
<svg style="position:absolute;left:421px;top:527px" width="7" height="5"><path d="M1.2 1.2 L3.3 3.3 L5.4 1.2" stroke="#8a1c30" stroke-width="0.9" fill="none"/></svg>
<div class="mono" style="left:680px;top:520px"><span style="color:#f07c8c">je</span><span style="color:#eeeee6"> </span><span style="color:#f09078">amsi.7<b class="sd">F</b><b class="sd">F</b>8<i class="z">O</i><b class="sd">E</b><b class="sd">E</b><b class="sd">B</b>82<i class="z">O</i>7</span></div>
<div class="mono" style="left:214.6px;top:539px;color:#b9b9b1"><i class="z">O</i><i class="z">O</i><i class="z">O</i><i class="z">O</i>7<b class="sc">F</b><b class="sc">F</b>8<i class="z">O</i><b class="sc">E</b><b class="sc">E</b><b class="sc">B</b>81<b class="sc">B</b>6</div>
<div class="mono" style="left:436.2px;top:539px;color:#f2f2ee">48:85<b class="sc">E</b><b class="sc">D</b></div>
<div class="mono" style="left:680px;top:539px"><span style="color:#9fb8f0">test</span><span style="color:#eeeee6"> </span><span style="color:#b8a0ec">rbp</span><span style="color:#eeeee6">,</span><span style="color:#b8a0ec">rbp</span></div>
<div class="mono" style="left:214.6px;top:558px;color:#b9b9b1"><i class="z">O</i><i class="z">O</i><i class="z">O</i><i class="z">O</i>7<b class="sc">F</b><b class="sc">F</b>8<i class="z">O</i><b class="sc">E</b><b class="sc">E</b><b class="sc">B</b>81<b class="sc">B</b>9</div>
<div class="mono" style="left:436.2px;top:558px;color:#f2f2ee">74 4<b class="sc">C</b></div>
<svg style="position:absolute;left:421px;top:565px" width="7" height="5"><path d="M1.2 1.2 L3.3 3.3 L5.4 1.2" stroke="#8a1c30" stroke-width="0.9" fill="none"/></svg>
<div class="mono" style="left:680px;top:558px"><span style="color:#f07c8c">je</span><span style="color:#eeeee6"> </span><span style="color:#f09078">amsi.7<b class="sd">F</b><b class="sd">F</b>8<i class="z">O</i><b class="sd">E</b><b class="sd">E</b><b class="sd">B</b>82<i class="z">O</i>7</span></div>
<div class="mono" style="left:214.6px;top:577px;color:#b9b9b1"><i class="z">O</i><i class="z">O</i><i class="z">O</i><i class="z">O</i>7<b class="sc">F</b><b class="sc">F</b>8<i class="z">O</i><b class="sc">E</b><b class="sc">E</b><b class="sc">B</b>81<b class="sc">B</b><b class="sc">B</b></div>
<div class="mono" style="left:436.2px;top:577px;color:#f2f2ee">48:85<b class="sc">D</b><b class="sc">B</b></div>
<div class="mono" style="left:680px;top:577px"><span style="color:#9fb8f0">test</span><span style="color:#eeeee6"> </span><span style="color:#b8a0ec">rbx</span><span style="color:#eeeee6">,</span><span style="color:#b8a0ec">rbx</span></div>
</div>
<div style="position:absolute;left:680px;top:535px;width:229px;height:46px;border:2px solid #a31212"></div>
<svg style="position:absolute;left:0;top:0" width="212" height="612"><path d="M199 415.5 H165.5 V472.5 H198" stroke="#ababab" stroke-width="1" stroke-dasharray="4 2" fill="none"/><path d="M194.5 469.0 L198.5 472.5 L194.5 476.0" stroke="#ababab" stroke-width="1" fill="none"/><path d="M199 453.5 H132.5 V607" stroke="#ababab" stroke-width="1" stroke-dasharray="4 2" fill="none"/><path d="M129.0 603.3 L132.5 607 L136.0 603.3" stroke="#ababab" stroke-width="1" fill="none"/><path d="M199 491.5 H143.5 V607" stroke="#ababab" stroke-width="1" stroke-dasharray="4 2" fill="none"/><path d="M140.0 603.3 L143.5 607 L147.0 603.3" stroke="#ababab" stroke-width="1" fill="none"/><path d="M199 529.5 H154.5 V607" stroke="#ababab" stroke-width="1" stroke-dasharray="4 2" fill="none"/><path d="M151.0 603.3 L154.5 607 L158.0 603.3" stroke="#ababab" stroke-width="1" fill="none"/><path d="M199 567.5 H165.5 V607" stroke="#ababab" stroke-width="1" stroke-dasharray="4 2" fill="none"/><path d="M162.0 603.3 L165.5 607 L169.0 603.3" stroke="#ababab" stroke-width="1" fill="none"/></svg>
<svg style="position:absolute;left:1536px;top:102px" width="18" height="490"><path d="M4.7 11 L9 4 L13.3 11 Z" fill="#9a9a9a"/><rect x="4" y="16.5" width="10" height="457" rx="5" fill="#3f3f3f"/><rect x="4" y="251.5" width="10" height="24.5" rx="5" fill="#6c6c6c"/><path d="M4.8 477.6 L13.3 477.6 L9 484.4 Z" fill="#9a9a9a"/></svg>
<svg style="position:absolute;left:213px;top:592px" width="1341" height="16"><path d="M11.7 3.7 L4 8 L11.7 12.2 Z" fill="#9a9a9a"/><rect x="15.7" y="3" width="1291.3" height="10" rx="5" fill="#424242"/><rect x="15.7" y="3" width="466" height="10" rx="5" fill="#777777"/><path d="M311 3.7 L318.4 8 L311 12.2 Z" transform="translate(1000,0)" fill="#9a9a9a"/></svg>
</body></html>
